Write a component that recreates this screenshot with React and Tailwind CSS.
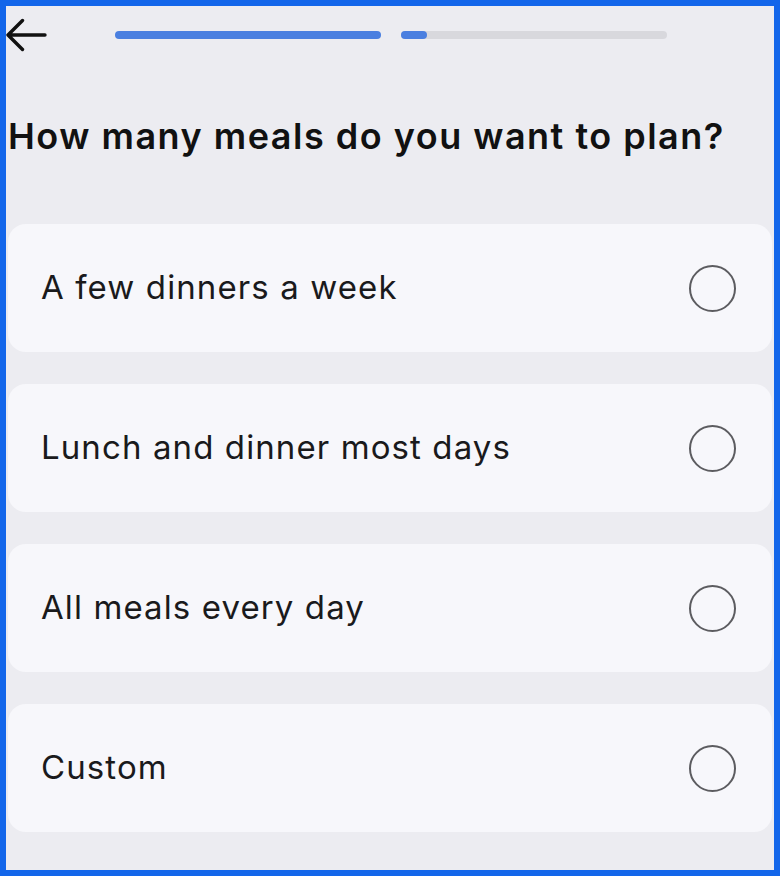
const OPTIONS = ['A few dinners a week', 'Lunch and dinner most days', 'All meals every day', 'Custom']

function BackArrow() {
  return (
    <svg width="42" height="36" viewBox="0 0 42 36" fill="none" className="-ml-[3px]">
      <path d="M40 18H3M17.5 3.5 3 18l14.5 14.5" stroke="#111" strokeWidth="3.4" strokeLinecap="round" strokeLinejoin="round" />
    </svg>
  )
}

function OptionCard({ label }) {
  return (
    <button
      type="button"
      className="flex h-[128px] w-full items-center justify-between rounded-[18px] bg-[#f7f7fb] pl-[33px] pr-[36px] text-left"
    >
      <span className="text-[33px] tracking-[1.1px] text-[#1a1a1c]">{label}</span>
      <span className="h-[47px] w-[47px] rounded-full border-[2.5px] border-[#5c5c60]" />
    </button>
  )
}

export default function App() {
  return (
    <div
      className="h-[876px] w-[780px] overflow-hidden border-[6px] border-[#1366ea] bg-[#ececf1] px-[2px]"
      style={{ fontFamily: 'Inter, "Noto Sans", sans-serif' }}
    >
      {/* top bar */}
      <div className="flex h-[58px] items-center">
        <BackArrow />
        <div className="ml-[68px] flex items-center gap-[20px]">
          <div className="h-[8px] w-[266px] rounded-full bg-[#4a7fe0]" />
          <div className="h-[8px] w-[266px] rounded-full bg-[#d8d8dd]">
            <div className="h-full w-[26px] rounded-full bg-[#4a7fe0]" />
          </div>
        </div>
      </div>

      <h1 className="mt-[48px] text-[36px] font-semibold leading-[48px] tracking-[1.5px] text-[#111]">
        How many meals do you want to plan?
      </h1>

      <div className="mt-[64px] flex flex-col gap-[32px]">
        {OPTIONS.map(o => <OptionCard key={o} label={o} />)}
      </div>
    </div>
  )
}
